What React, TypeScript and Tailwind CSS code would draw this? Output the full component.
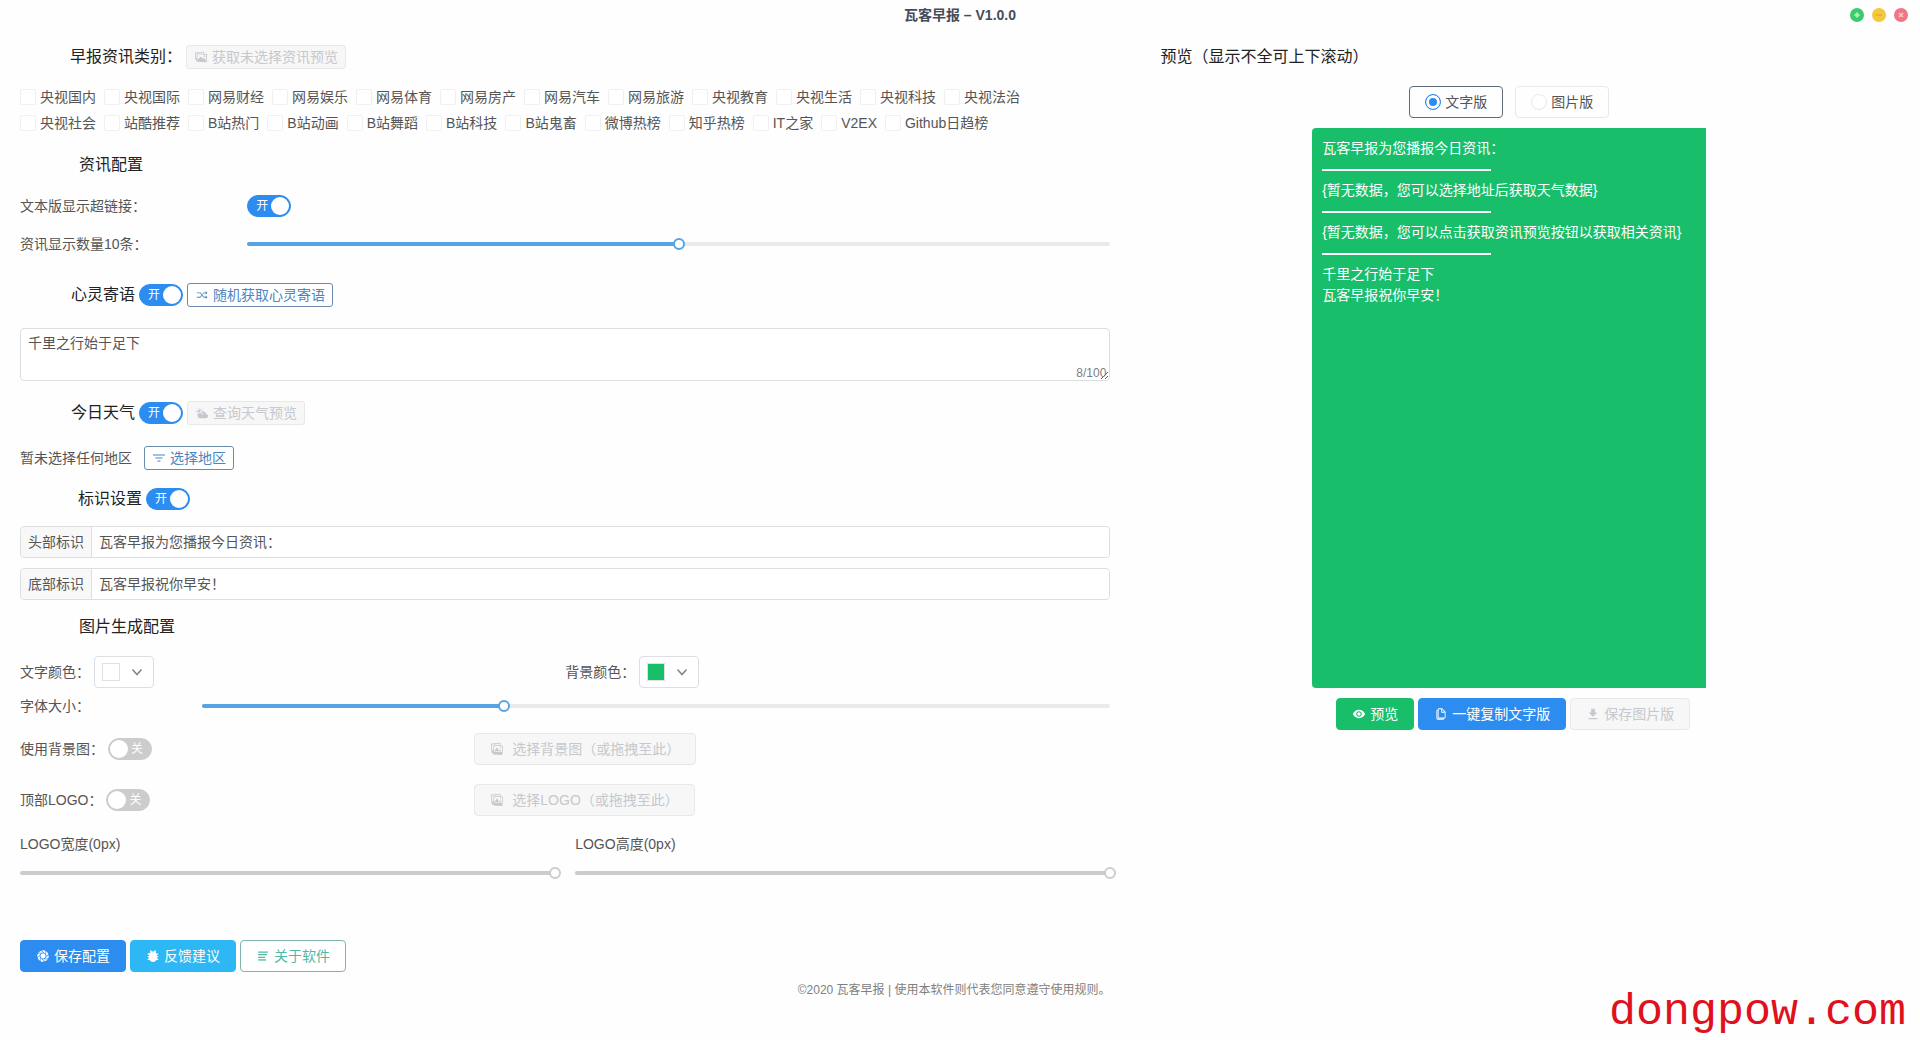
import { useState } from "react";
import type { ReactNode } from "react";
import clsx from "clsx";
import {
  IoIosAperture,
  IoIosImages,
  IoIosShuffle,
  IoMdBug,
  IoMdCopy,
  IoMdDownload,
  IoMdEye,
  IoMdImages,
  IoMdList,
  IoMdPartlySunny,
} from "react-icons/io";

const categories = [
  "央视国内", "央视国际", "网易财经", "网易娱乐", "网易体育", "网易房产",
  "网易汽车", "网易旅游", "央视教育", "央视生活", "央视科技", "央视法治",
  "央视社会", "站酷推荐", "B站热门", "B站动画", "B站舞蹈", "B站科技",
  "B站鬼畜", "微博热榜", "知乎热榜", "IT之家", "V2EX", "Github日趋榜",
];

const variants = {
  primary: "border-[#2d8cf0] bg-[#2d8cf0] text-white",
  info: "border-[#2db7f5] bg-[#2db7f5] text-white",
  success: "border-[#19be6b] bg-[#19be6b] text-white",
  primaryGhost: "border-[#6a8bab] bg-white text-[#4a86c0]",
  successGhost: "border-[#7fb5ad] bg-white text-[#4fb8a4]",
  disabled: "border-[#e8e8e8] bg-[#f7f7f7] text-[#c5c8ce]",
};

type ButtonProps = {
  variant: keyof typeof variants;
  icon: ReactNode;
  small?: boolean;
  children: ReactNode;
};

function Button({ variant, icon, small, children }: ButtonProps) {
  return (
    <button
      type="button"
      disabled={variant === "disabled"}
      className={clsx(
        "flex shrink-0 items-center gap-1 border text-sm leading-none whitespace-nowrap",
        small ? "h-6 rounded-[3px] px-[7px]" : "h-8 rounded px-[15px]",
        variants[variant]
      )}
    >
      {icon}
      <span>{children}</span>
    </button>
  );
}

function FunnelIcon() {
  return (
    <svg viewBox="0 0 14 14" className="size-3.5 fill-none stroke-current" strokeWidth="1.2">
      <path d="M1 4h12M3.5 7h7M5.5 10h3" />
    </svg>
  );
}

function Toggle({ label, initial }: { label: string; initial: boolean }) {
  const [on, setOn] = useState(initial);
  return (
    <button
      type="button"
      role="switch"
      aria-checked={on}
      aria-label={label}
      onClick={() => setOn(!on)}
      className={clsx(
        "flex h-[22px] w-11 shrink-0 items-center justify-between rounded-full border p-px text-xs leading-none text-white",
        on ? "border-[#2d8cf0] bg-[#2d8cf0] pl-2" : "flex-row-reverse border-[#ccc] bg-[#ccc] pr-2"
      )}
    >
      <span>{on ? "开" : "关"}</span>
      <span className="size-[18px] rounded-full bg-white" />
    </button>
  );
}

function Slider({ id, initial, disabled }: { id: string; initial: number; disabled?: boolean }) {
  const [value, setValue] = useState(initial);
  return (
    <div className="relative h-1 w-full rounded-full bg-[#e8eaec]">
      <div
        className={clsx("h-1 rounded-full", disabled ? "bg-[#ccc]" : "bg-[#57a3e3]")}
        style={{ width: `${value}%` }}
      />
      <input
        id={id}
        type="range"
        min={0}
        max={100}
        step="any"
        value={value}
        disabled={disabled}
        onChange={(e) => setValue(Number(e.target.value))}
        className={clsx(
          "absolute -top-1 -left-1.5 h-3 w-[calc(100%+12px)] appearance-none bg-transparent",
          "[&::-webkit-slider-thumb]:size-3 [&::-webkit-slider-thumb]:appearance-none [&::-webkit-slider-thumb]:rounded-full [&::-webkit-slider-thumb]:border-2 [&::-webkit-slider-thumb]:bg-white",
          disabled
            ? "[&::-webkit-slider-thumb]:border-[#ccc]"
            : "[&::-webkit-slider-thumb]:border-[#57a3e3]"
        )}
      />
    </div>
  );
}

function ColorPicker({ id, swatch }: { id: string; swatch: string }) {
  return (
    <button
      id={id}
      type="button"
      className="flex h-8 w-[60px] items-center justify-between rounded border border-[#dcdee2] bg-white pr-2.5 pl-[7px]"
    >
      <span className={clsx("size-[18px] border border-[#e0e0e0]", swatch)} />
      <svg viewBox="0 0 12 12" className="size-3 fill-none stroke-[#808695]" strokeWidth="1.6">
        <path d="M1.5 3.5 6 8.5l4.5-5" />
      </svg>
    </button>
  );
}

function TextField({ id, label, text }: { id: string; label: string; text: string }) {
  return (
    <div className="flex h-8 rounded border border-[#dcdee2] text-sm">
      <label htmlFor={id} className="flex shrink-0 items-center rounded-l border-r border-[#dcdee2] bg-[#f8f8f9] px-[7px]">
        {label}
      </label>
      <input id={id} type="text" defaultValue={text} className="min-w-0 grow rounded-r bg-white px-[7px] outline-none" />
    </div>
  );
}

function TitleBar() {
  return (
    <header className="grid h-[30px] grid-cols-3 items-center">
      <h1 className="col-start-2 text-center text-sm font-bold text-[#464c5b]">瓦客早报 – V1.0.0</h1>
      <div className="flex items-center justify-end gap-2 pr-3">
        <button type="button" aria-label="最大化" className="flex size-3.5 items-center justify-center rounded-full bg-[#3ccb6a]">
          <svg viewBox="0 0 14 14" className="size-3.5 fill-[#a6efbb]"><path d="M7 4l3 3-3 3-3-3z" /></svg>
        </button>
        <button type="button" aria-label="最小化" className="flex size-3.5 items-center justify-center rounded-full bg-[#f5c73d]">
          <svg viewBox="0 0 14 14" className="size-3.5 fill-none stroke-[#e3ac2a]" strokeWidth="1.5"><path d="M4 7h6" /></svg>
        </button>
        <button type="button" aria-label="关闭" className="flex size-3.5 items-center justify-center rounded-full bg-[#f0748a]">
          <svg viewBox="0 0 14 14" className="size-3.5 fill-none stroke-[#ffd0b8]" strokeWidth="1.5"><path d="M5 5l4 4M9 5l-4 4" /></svg>
        </button>
      </div>
    </header>
  );
}

function Settings() {
  return (
    <section className="w-[58%] shrink-0">
      <div className="flex h-[54px] items-center gap-1 pl-[50px]">
        <h2 className="text-base text-[#222]">早报资讯类别：</h2>
        <Button small variant="disabled" icon={<IoMdImages />}>获取未选择资讯预览</Button>
      </div>
      <div className="flex flex-wrap gap-x-2 pr-2">
        {categories.map((name) => (
          <label key={name} className="flex h-[26px] items-center gap-1">
            <input type="checkbox" className="size-4 appearance-none rounded-xs border border-[#f0f0f0] bg-white checked:bg-[#2d8cf0]" />
            {name}
          </label>
        ))}
      </div>

      <h2 className="flex h-[58px] items-center pl-[59px] text-base text-[#222]">资讯配置</h2>
      <div className="flex h-6 items-center">
        <span className="w-5/24">文本版显示超链接：</span>
        <Toggle label="文本版显示超链接" initial={true} />
      </div>
      <div className="flex h-[52px] items-center">
        <label htmlFor="count" className="w-5/24 shrink-0">资讯显示数量10条：</label>
        <Slider id="count" initial={50} />
      </div>

      <div className="flex h-[50px] items-center gap-1 pl-[51px]">
        <h2 className="text-base text-[#222]">心灵寄语</h2>
        <Toggle label="心灵寄语" initial={true} />
        <Button small variant="primaryGhost" icon={<IoIosShuffle />}>随机获取心灵寄语</Button>
      </div>
      <div className="relative mt-2">
        <textarea
          aria-label="心灵寄语内容"
          defaultValue="千里之行始于足下"
          className="block h-[53px] w-full resize-y rounded border border-[#dcdee2] bg-white px-[7px] py-1 leading-[21px] outline-none"
        />
        <span className="absolute right-1 bottom-0 text-xs text-[#808080]">8/100</span>
      </div>

      <div className="flex h-[63px] items-center gap-1 pl-[51px]">
        <h2 className="text-base text-[#222]">今日天气</h2>
        <Toggle label="今日天气" initial={true} />
        <Button small variant="disabled" icon={<IoMdPartlySunny />}>查询天气预览</Button>
      </div>
      <div className="flex h-7 items-center gap-3">
        <span>暂未选择任何地区</span>
        <Button small variant="primaryGhost" icon={<FunnelIcon />}>选择地区</Button>
      </div>

      <div className="flex h-[54px] items-center gap-1 pl-[58px]">
        <h2 className="text-base text-[#222]">标识设置</h2>
        <Toggle label="标识设置" initial={true} />
      </div>
      <div className="flex flex-col gap-2.5">
        <TextField id="head" label="头部标识" text="瓦客早报为您播报今日资讯：" />
        <TextField id="foot" label="底部标识" text="瓦客早报祝你早安！" />
      </div>

      <h2 className="flex h-[53px] items-center pl-[59px] text-base text-[#222]">图片生成配置</h2>
      <div className="grid h-[38px] grid-cols-2 items-center">
        <div className="flex items-center gap-1">
          <label htmlFor="text-color">文字颜色：</label>
          <ColorPicker id="text-color" swatch="bg-white" />
        </div>
        <div className="flex items-center gap-1">
          <label htmlFor="bg-color">背景颜色：</label>
          <ColorPicker id="bg-color" swatch="bg-[#19be6b]" />
        </div>
      </div>
      <div className="flex h-[29px] items-center">
        <label htmlFor="font-size" className="w-4/24 shrink-0">字体大小：</label>
        <Slider id="font-size" initial={33.3} />
      </div>
      <div className="flex h-[58px] items-center">
        <div className="flex w-10/24 items-center gap-1">
          <span>使用背景图：</span>
          <Toggle label="使用背景图" initial={false} />
        </div>
        <Button variant="disabled" icon={<IoIosImages className="mr-1" />}>选择背景图（或拖拽至此）</Button>
      </div>
      <div className="flex h-[44px] items-center">
        <div className="flex w-10/24 items-center gap-1">
          <span>顶部LOGO：</span>
          <Toggle label="顶部LOGO" initial={false} />
        </div>
        <Button variant="disabled" icon={<IoIosImages className="mr-1" />}>选择LOGO（或拖拽至此）</Button>
      </div>
      <div className="grid grid-cols-2 gap-5">
        <div>
          <label htmlFor="logo-width" className="flex h-[44px] items-center">LOGO宽度(0px)</label>
          <div className="flex h-3.5 items-center">
            <Slider id="logo-width" initial={100} disabled />
          </div>
        </div>
        <div>
          <label htmlFor="logo-height" className="flex h-[44px] items-center">LOGO高度(0px)</label>
          <div className="flex h-3.5 items-center">
            <Slider id="logo-height" initial={100} disabled />
          </div>
        </div>
      </div>

      <div className="mt-[60px] flex gap-1">
        <Button variant="primary" icon={<IoIosAperture />}>保存配置</Button>
        <Button variant="info" icon={<IoMdBug />}>反馈建议</Button>
        <Button variant="successGhost" icon={<IoMdList />}>关于软件</Button>
      </div>
      <footer className="flex h-9 items-center justify-end text-xs whitespace-nowrap text-[#808080]">
        ©2020 瓦客早报 | 使用本软件则代表您同意遵守使用规则。
      </footer>
    </section>
  );
}

function Preview() {
  const [mode, setMode] = useState("文字版");
  return (
    <section className="grow pl-2">
      <h2 className="flex h-[54px] items-center pl-[42px] text-base text-[#222]">预览（显示不全可上下滚动）</h2>
      <div className="mt-0.5 flex justify-center gap-3">
        {["文字版", "图片版"].map((name) => (
          <label
            key={name}
            className={clsx(
              "flex h-8 items-center gap-1 rounded border px-[15px]",
              mode === name ? "border-[#5f6b78]" : "border-[#e8e8e8]"
            )}
          >
            <input
              type="radio"
              name="mode"
              checked={mode === name}
              onChange={() => setMode(name)}
              className="size-4 appearance-none rounded-full border border-[#e8e8e8] bg-white checked:border-[#2d8cf0] checked:bg-[#2d8cf0] checked:shadow-[inset_0_0_0_3px_white]"
            />
            {name}
          </label>
        ))}
      </div>
      <div className="mx-auto mt-2.5 h-[560px] w-[394px] overflow-y-auto rounded-l bg-[#19be6b] p-2.5 leading-[21px] whitespace-nowrap text-white">
        <p>瓦客早报为您播报今日资讯：</p>
        <hr className="mt-2.5 mb-[9px] w-[169px] border-t-2 border-white" />
        <p>{"{暂无数据，您可以选择地址后获取天气数据}"}</p>
        <hr className="mt-2.5 mb-[9px] w-[169px] border-t-2 border-white" />
        <p>{"{暂无数据，您可以点击获取资讯预览按钮以获取相关资讯}"}</p>
        <hr className="mt-2.5 mb-[9px] w-[169px] border-t-2 border-white" />
        <p>千里之行始于足下</p>
        <p>瓦客早报祝你早安！</p>
      </div>
      <div className="mt-2.5 flex justify-center gap-1 pl-2">
        <Button variant="success" icon={<IoMdEye />}>预览</Button>
        <Button variant="primary" icon={<IoMdCopy />}>一键复制文字版</Button>
        <Button variant="disabled" icon={<IoMdDownload />}>保存图片版</Button>
      </div>
    </section>
  );
}

export default function App() {
  return (
    <div className="relative min-h-screen bg-[#fefefe] font-['Liberation_Sans','Noto_Sans_CJK_SC',sans-serif] text-sm text-[#555]">
      <TitleBar />
      <main className="flex px-5">
        <Settings />
        <Preview />
      </main>
      <p className="absolute right-3.5 bottom-0 font-['Liberation_Mono',monospace] text-[45px] leading-[54px] text-[#e0101c]">
        dongpow.com
      </p>
    </div>
  );
}
